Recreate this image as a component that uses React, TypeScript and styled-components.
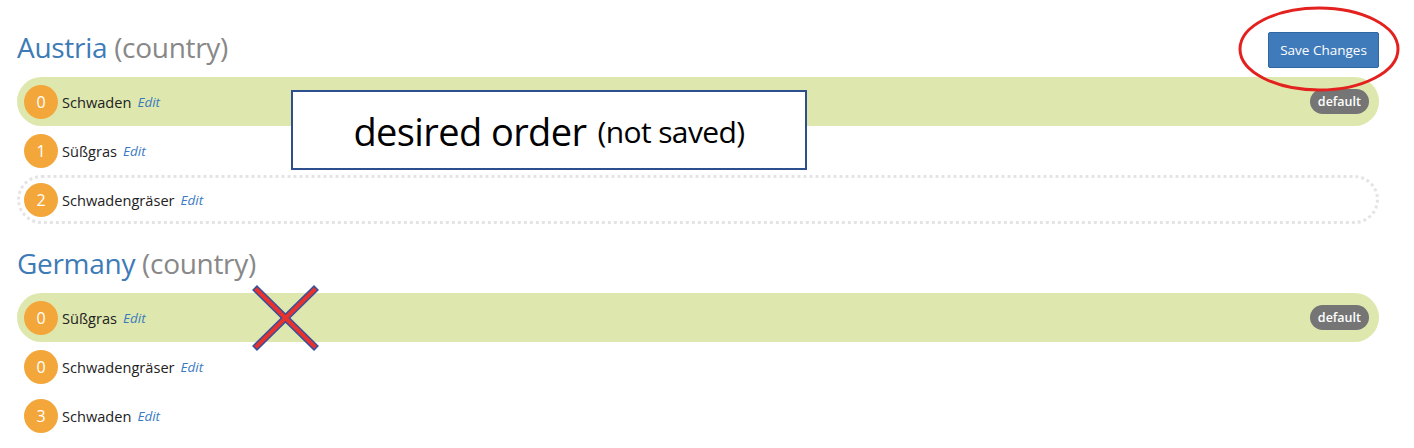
import React from 'react';
import styled, { createGlobalStyle } from 'styled-components';

const Global = createGlobalStyle`
  body {
    margin: 0;
    background: #fff;
    font-family: 'Open Sans', 'Noto Sans', sans-serif;
  }
`;

const Page = styled.div`
  position: relative;
  width: 1414px;
  height: 448px;
  overflow: hidden;
  padding: 17px 35px 0 17px;
  box-sizing: border-box;
`;

const Section = styled.section`
  margin-bottom: 9px;
`;

const Header = styled.div`
  height: 60px;
  display: flex;
  align-items: center;
  justify-content: space-between;
`;

const Title = styled.h2`
  margin: 0;
  font-size: 28px;
  font-weight: 400;
  color: #3e7bb6;
  letter-spacing: -0.3px;
  span {
    color: #888;
  }
`;

const SaveButton = styled.button`
  margin-top: 6px;
  width: 111px;
  height: 36px;
  background: #3f7bba;
  border: 1px solid #2f67a3;
  border-radius: 2px;
  color: #fff;
  font-family: inherit;
  font-size: 13.5px;
`;

const List = styled.ul`
  list-style: none;
  margin: 0;
  padding: 0;
`;

const Row = styled.li<{ $active?: boolean; $drop?: boolean }>`
  height: 49px;
  box-sizing: border-box;
  display: flex;
  align-items: center;
  padding: 0 7px 0 7px;
  border-radius: 25px;
  background: ${(p) => (p.$active ? '#dee8ae' : 'transparent')};
  border: ${(p) => (p.$drop ? '3px dotted #e4e4e4' : '3px solid transparent')};
  font-size: 14.6px;
  color: #222;
`;

const Badge = styled.span`
  width: 34px;
  height: 34px;
  margin-left: -3px;
  border-radius: 50%;
  background: #f3a73b;
  color: #fff;
  display: flex;
  align-items: center;
  justify-content: center;
  font-size: 16px;
  margin-right: 4px;
  flex-shrink: 0;
`;

const EditLink = styled.a`
  margin-left: 6px;
  font-style: italic;
  color: #3a7abf;
  font-size: 13.5px;
`;

const DefaultTag = styled.span`
  margin-left: auto;
  background: #757575;
  color: #fff;
  font-size: 12.5px;
  font-weight: 600;
  height: 25px;
  padding: 0 8px;
  border-radius: 13px;
  display: flex;
  align-items: center;
`;

const NoteBox = styled.div`
  position: absolute;
  left: 291px;
  top: 90px;
  width: 516px;
  height: 80px;
  box-sizing: border-box;
  border: 2px solid #2d4f8e;
  background: #fff;
  display: flex;
  align-items: center;
  justify-content: center;
  padding-top: 2px;
  font-size: 38px;
  color: #000;
  letter-spacing: -0.6px;
  small {
    font-size: 30px;
    margin-left: 11px;
    letter-spacing: -0.6px;
  }
`;

const Overlay = styled.svg`
  position: absolute;
  left: 0;
  top: 0;
  pointer-events: none;
`;

type Item = { n: number; name: string; active?: boolean; drop?: boolean };

const austria: Item[] = [
  { n: 0, name: 'Schwaden', active: true },
  { n: 1, name: 'Süßgras' },
  { n: 2, name: 'Schwadengräser', drop: true },
];

const germany: Item[] = [
  { n: 0, name: 'Süßgras', active: true },
  { n: 0, name: 'Schwadengräser' },
  { n: 3, name: 'Schwaden' },
];

const Rows = ({ items }: { items: Item[] }) => (
  <List>
    {items.map((it, i) => (
      <Row key={i} $active={it.active} $drop={it.drop}>
        <Badge>{it.n}</Badge>
        {it.name}
        <EditLink>Edit</EditLink>
        {it.active && <DefaultTag>default</DefaultTag>}
      </Row>
    ))}
  </List>
);

export default function App() {
  return (
    <>
      <Global />
      <Page>
        <Section>
          <Header>
            <Title>
              Austria <span>(country)</span>
            </Title>
            <SaveButton>Save Changes</SaveButton>
          </Header>
          <Rows items={austria} />
        </Section>
        <Section>
          <Header>
            <Title>
              Germany <span>(country)</span>
            </Title>
          </Header>
          <Rows items={germany} />
        </Section>

        <NoteBox>
          desired order<small>(not saved)</small>
        </NoteBox>

        <Overlay width="1414" height="448">
          <ellipse cx="1319" cy="49" rx="79" ry="41" fill="none" stroke="#e3211f" strokeWidth="3" />
          <g strokeLinecap="square">
            <line x1="257" y1="290" x2="314" y2="346" stroke="#3a4f9a" strokeWidth="7" />
            <line x1="314" y1="290" x2="257" y2="346" stroke="#3a4f9a" strokeWidth="7" />
            <line x1="257" y1="290" x2="314" y2="346" stroke="#e8322c" strokeWidth="4" />
            <line x1="314" y1="290" x2="257" y2="346" stroke="#e8322c" strokeWidth="4" />
          </g>
        </Overlay>
      </Page>
    </>
  );
}
